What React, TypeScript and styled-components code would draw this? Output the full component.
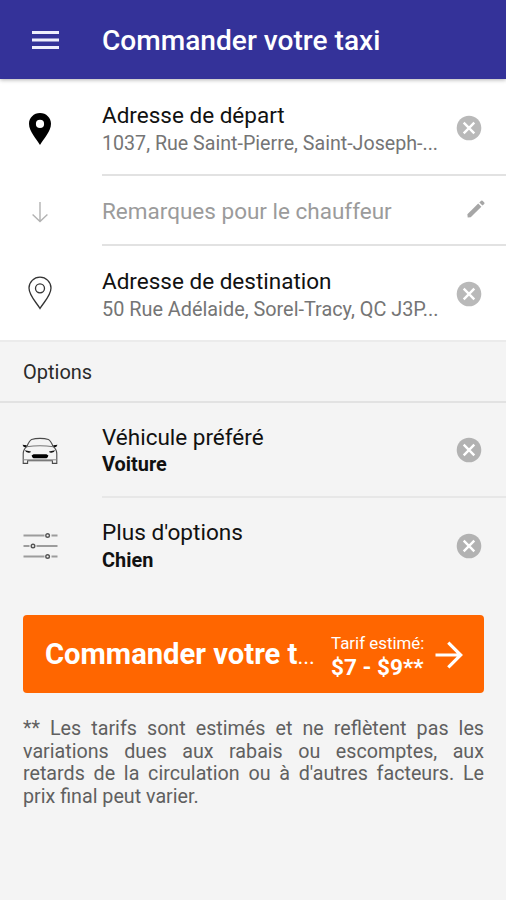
import React from 'react';
import styled, { createGlobalStyle, css } from 'styled-components';

const GlobalStyle = createGlobalStyle`
  *, *::before, *::after { box-sizing: border-box; }
  body {
    margin: 0;
    background: #f4f4f4;
    font-family: Roboto, "Liberation Sans", sans-serif;
    color: #111;
  }
  button { font: inherit; color: inherit; border: 0; background: none; padding: 0; cursor: pointer; }
  svg { display: block; flex: none; }
`;

const Screen = styled.div`
  display: flex;
  flex-direction: column;
  min-height: 900px;
  overflow: hidden;
`;

const AppBar = styled.header`
  position: relative;
  display: flex;
  align-items: center;
  height: 79px;
  background: #343299;
  box-shadow: 0 1px 4px rgba(0, 0, 0, 0.3);
`;

const MenuButton = styled.button`
  display: flex;
  width: 102px;
  padding-left: 32px;
`;

const AppTitle = styled.h1`
  margin: 0;
  padding-top: 3px;
  font-size: 28.1px;
  line-height: 34px;
  font-weight: 500;
  color: #fff;
  white-space: nowrap;
`;

const AddressList = styled.section`
  background: #fff;
  border-bottom: 2px solid #ebebeb;
`;

const OptionList = styled.section``;

const Row = styled.div<{ $height: number }>`
  display: flex;
  height: ${(p) => p.$height}px;
`;

const IconCell = styled.div<{ $shift?: number }>`
  display: flex;
  align-items: center;
  justify-content: center;
  width: 80px;
  margin-right: 22px;
  padding-top: ${(p) => p.$shift ?? 0}px;
`;

const RowBody = styled.div<{ $divided?: boolean; $tone?: string }>`
  display: flex;
  flex: 1;
  align-items: center;
  min-width: 0;
  border-bottom: ${(p) => (p.$divided ? `2px solid ${p.$tone ?? '#e2e2e2'}` : '0')};
`;

const Texts = styled.div<{ $shift?: number }>`
  flex: 1;
  min-width: 0;
  padding-top: ${(p) => p.$shift ?? 0}px;
  white-space: nowrap;
`;

const Label = styled.div<{ $muted?: boolean; $size?: number }>`
  font-size: ${(p) => p.$size ?? 22.5}px;
  line-height: 28px;
  color: ${(p) => (p.$muted ? '#9b9b9b' : '#111')};
`;

const Detail = styled.div<{ $strong?: boolean; $size?: number }>`
  font-size: ${(p) => p.$size ?? 19.9}px;
  line-height: 26px;
  margin-top: 2px;
  color: #757575;
  ${(p) =>
    p.$strong &&
    css`
      margin-top: 1px;
      font-weight: 700;
      color: #111;
    `}
`;

const RowAction = styled.button<{ $shift?: number }>`
  display: flex;
  justify-content: center;
  width: 74px;
  padding-top: ${(p) => p.$shift ?? 0}px;
`;

const EditAction = styled(RowAction)`
  padding-left: 14px;
  padding-bottom: 3px;
`;

const SectionTitle = styled.h2`
  margin: 0;
  height: 61px;
  padding-left: 23px;
  border-bottom: 2px solid #e2e2e2;
  font-size: 20px;
  font-weight: 400;
  line-height: 61px;
  color: #2a2a2a;
`;

const OrderButton = styled.button`
  display: flex;
  align-items: center;
  height: 78px;
  margin: 22px 22px 0 23px;
  padding: 2px 21px 0 22px;
  border-radius: 4px;
  background: #ff6600;
  color: #fff;
  text-align: left;
  white-space: nowrap;
`;

const OrderLabel = styled.span`
  flex: 1;
  padding-top: 1px;
  font-size: 29.2px;
  font-weight: 700;
  line-height: 36px;
`;

const Ellipsis = styled.span`
  font-size: 22px;
  font-weight: 400;
`;

const Fare = styled.span`
  display: flex;
  flex-direction: column;
  width: 104px;
  padding-top: 2px;
`;

const FareCaption = styled.span`
  font-size: 16.9px;
  line-height: 22px;
`;

const FareAmount = styled.span`
  font-size: 22.6px;
  font-weight: 700;
  line-height: 27px;
`;

const Disclaimer = styled.p`
  margin: 25px 22px 0 23px;
  font-size: 19.7px;
  line-height: 22.5px;
  text-align: justify;
  color: #606060;
`;

const MenuIcon = () => (
  <svg width="27" height="20" viewBox="0 0 27 20">
    <path d="M0 2.5H27M0 10H27M0 17.5H27" stroke="#eeeefc" strokeWidth="3" />
  </svg>
);

const SolidPin = () => (
  <svg width="24" height="34" viewBox="0 0 24 34">
    <path
      fill="#000"
      fillRule="evenodd"
      d="M12 1C5.8 1 1 5.8 1 11.8C1 19.6 8.6 27 12 33C15.4 27 23 19.6 23 11.8C23 5.8 18.2 1 12 1ZM12 7.8A4.1 4.1 0 1 1 12 16A4.1 4.1 0 1 1 12 7.8Z"
    />
  </svg>
);

const OutlinePin = () => (
  <svg width="24" height="34" viewBox="0 0 24 34" fill="none" stroke="#333" strokeWidth="1.3">
    <path d="M12 1.2C6 1.2 1 6 1 12C1 19.6 8.5 26.5 12 32.5C15.5 26.5 23 19.6 23 12C23 6 18 1.2 12 1.2Z" />
    <circle cx="12" cy="12.3" r="4.5" />
  </svg>
);

const DownArrow = () => (
  <svg width="16" height="21" viewBox="0 0 16 21" fill="none" stroke="#b2b2b2" strokeWidth="1.4">
    <path d="M8 0V19.5M0.6 12.5L8 19.6L15.4 12.5" />
  </svg>
);

const ClearIcon = ({ color = '#b9b9b9' }: { color?: string }) => (
  <svg width="26" height="26" viewBox="0 0 26 26">
    <circle cx="13" cy="13" r="12.3" fill={color} />
    <path d="M7.700 7.700L18.300 18.300M18.300 7.700L7.700 18.300" stroke="#fff" strokeWidth="2.4" />
  </svg>
);

const PencilIcon = () => (
  <svg width="18" height="18" viewBox="0 0 18 18" fill="#a6a6a6">
    <path d="M0.4 14.2L11.2 3.6L14.4 6.7L3.7 17.2L0.7 17.4Z" />
    <path d="M12.3 2.5L14.2 0.7Q14.9 0.2 15.5 0.8L17.3 2.5Q17.9 3.2 17.2 3.9L15.5 5.6Z" />
  </svg>
);

const CarIcon = () => (
  <svg width="36" height="28" viewBox="0 0 36 28" fill="none" stroke="#4a4a4a">
    <path d="M5 9.5C6.5 5.5 7.8 3.3 9.6 2.5C14 1 22 1 26.4 2.5C28.2 3.3 29.5 5.5 31 9.5" strokeWidth="1.1" />
    <path d="M4.6 9.7C12 8.7 24 8.7 31.4 9.7" stroke="#777" strokeWidth="1.1" />
    <path d="M4.6 9.7C2 12 1.2 14 1.2 17V26.4H5.6V23.7H30.4V26.4H34.8V17C34.8 14 34 12 31.4 9.7" strokeWidth="1.1" />
    <path d="M1.2 22.8H34.8" stroke="#888" />
    <path d="M0.5 7.8L4.8 8.3L4.3 10.2L1.8 10.1ZM35.5 7.8L31.2 8.3L31.7 10.2L34.2 10.1Z" fill="#111" stroke="none" />
    <path d="M2.8 13.3L9 14.5Q8.6 16 6.5 15.8Q3.8 15.6 2.8 13.3ZM33.2 13.3L27 14.5Q27.4 16 29.5 15.8Q32.2 15.6 33.2 13.3Z" fill="#111" stroke="none" />
    <path d="M11.5 17.2H24.5L26.4 18.6Q26 21 24.5 21.2H11.5Q10 21 9.6 18.6Z" fill="#000" stroke="none" />
  </svg>
);

const SlidersIcon = () => (
  <svg width="35" height="26" viewBox="0 0 35 26" fill="none">
    <path d="M0.5 2.5H21.5M28.5 2.5H34.5M0.5 13H6.5M13.5 13H34.5M0.5 23.5H21.5M28.5 23.5H34.5" stroke="#9c9c9c" strokeWidth="1.8" />
    <g stroke="#555" strokeWidth="1.4">
      <circle cx="24.6" cy="2.5" r="1.8" />
      <circle cx="10" cy="13" r="1.8" />
      <circle cx="24.6" cy="23.5" r="1.8" />
    </g>
  </svg>
);

const ForwardArrow = () => (
  <svg width="28" height="28" viewBox="0 0 28 28" fill="none" stroke="#fff" strokeWidth="3.2">
    <path d="M0.5 14H25.5M13.3 1.6L25.7 14L13.3 26.4" />
  </svg>
);

export default function App() {
  return (
    <>
      <GlobalStyle />
      <Screen>
        <AppBar>
          <MenuButton aria-label="Menu">
            <MenuIcon />
          </MenuButton>
          <AppTitle>Commander votre taxi</AppTitle>
        </AppBar>

        <AddressList>
          <Row $height={97}>
            <IconCell $shift={2}>
              <SolidPin />
            </IconCell>
            <RowBody $divided>
              <Texts $shift={4}>
                <Label>Adresse de départ</Label>
                <Detail $size={19.65}>1037, Rue Saint-Pierre, Saint-Joseph-...</Detail>
              </Texts>
              <RowAction $shift={3} aria-label="Effacer">
                <ClearIcon />
              </RowAction>
            </RowBody>
          </Row>
          <Row $height={70}>
            <IconCell $shift={2}>
              <DownArrow />
            </IconCell>
            <RowBody $divided>
              <Texts $shift={2}>
                <Label $muted>Remarques pour le chauffeur</Label>
              </Texts>
              <EditAction aria-label="Modifier">
                <PencilIcon />
              </EditAction>
            </RowBody>
          </Row>
          <Row $height={94}>
            <IconCell>
              <OutlinePin />
            </IconCell>
            <RowBody>
              <Texts $shift={4}>
                <Label>Adresse de destination</Label>
                <Detail $size={19.85}>50 Rue Adélaide, Sorel-Tracy, QC J3P...</Detail>
              </Texts>
              <RowAction $shift={1} aria-label="Effacer">
                <ClearIcon />
              </RowAction>
            </RowBody>
          </Row>
        </AddressList>

        <SectionTitle>Options</SectionTitle>
        <OptionList>
          <Row $height={95}>
            <IconCell $shift={1}>
              <CarIcon />
            </IconCell>
            <RowBody $divided $tone="#e7e7e7">
              <Texts $shift={1}>
                <Label>Véhicule préféré</Label>
                <Detail $strong>Voiture</Detail>
              </Texts>
              <RowAction $shift={1} aria-label="Effacer">
                <ClearIcon color="#b2b2b2" />
              </RowAction>
            </RowBody>
          </Row>
          <Row $height={95}>
            <IconCell>
              <SlidersIcon />
            </IconCell>
            <RowBody>
              <Texts $shift={1}>
                <Label $size={22.6}>Plus d'options</Label>
                <Detail $strong>Chien</Detail>
              </Texts>
              <RowAction aria-label="Effacer">
                <ClearIcon color="#b2b2b2" />
              </RowAction>
            </RowBody>
          </Row>
        </OptionList>

        <OrderButton>
          <OrderLabel>
            Commander votre t<Ellipsis>...</Ellipsis>
          </OrderLabel>
          <Fare>
            <FareCaption>Tarif estimé:</FareCaption>
            <FareAmount>$7 - $9**</FareAmount>
          </Fare>
          <ForwardArrow />
        </OrderButton>

        <Disclaimer>
          ** Les tarifs sont estimés et ne reflètent pas les variations dues aux rabais ou escomptes, aux
          retards de la circulation ou à d'autres facteurs. Le prix final peut varier.
        </Disclaimer>
      </Screen>
    </>
  );
}
